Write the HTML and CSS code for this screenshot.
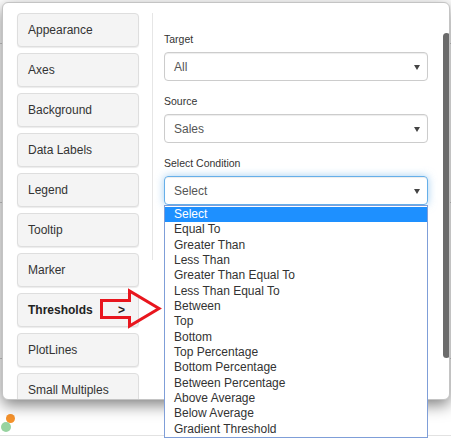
FILE: index.html
```html
<!DOCTYPE html>
<html>
<head>
<meta charset="utf-8">
<link rel="stylesheet" href="styles.css">
</head>
<body>
<div class="page">
  <div class="bg-row r1"></div>
  <div class="bg-row r2"></div>
  <div class="bg-row r3"></div>
  <div class="dots"><span class="dot orange"></span><span class="dot green"></span></div>
  <div class="bg-foot"></div>
</div>

<div class="modal">
  <div class="modal-body">
    <nav class="tabs">
      <div class="tab">Appearance</div>
      <div class="tab">Axes</div>
      <div class="tab">Background</div>
      <div class="tab">Data Labels</div>
      <div class="tab">Legend</div>
      <div class="tab">Tooltip</div>
      <div class="tab">Marker</div>
      <div class="tab active"><span>Thresholds</span><span>&gt;</span></div>
      <div class="tab">PlotLines</div>
      <div class="tab">Small Multiples</div>
    </nav>
    <section class="panel">
      <div class="field">
        <div class="label">Target</div>
        <div class="select"><span>All</span><i class="caret"></i></div>
      </div>
      <div class="field">
        <div class="label">Source</div>
        <div class="select"><span>Sales</span><i class="caret"></i></div>
      </div>
      <div class="field">
        <div class="label">Select Condition</div>
        <div class="select focus"><span>Select</span><i class="caret"></i></div>
      </div>
    </section>
  </div>
  <div class="thumb"></div>
</div>

<ul class="dropdown">
  <li class="hl">Select</li>
  <li>Equal To</li>
  <li>Greater Than</li>
  <li>Less Than</li>
  <li>Greater Than Equal To</li>
  <li>Less Than Equal To</li>
  <li>Between</li>
  <li>Top</li>
  <li>Bottom</li>
  <li>Top Percentage</li>
  <li>Bottom Percentage</li>
  <li>Between Percentage</li>
  <li>Above Average</li>
  <li>Below Average</li>
  <li>Gradient Threshold</li>
</ul>

<svg class="arrow" width="72" height="48" viewBox="96 284 72 48">
  <polygon points="101.5,300.5 129.5,300.5 129.5,291 159,308.5 129.5,326 129.5,317.5 101.5,317.5" fill="none" stroke="#e8161e" stroke-width="3" stroke-linejoin="miter"/>
</svg>
</body>
</html>
```

FILE: styles.css
```css
* { box-sizing: border-box; }
html, body { margin: 0; padding: 0; }
body {
  width: 451px;
  height: 441px;
  overflow: hidden;
  background: #fff;
  font-family: "Liberation Sans", Arial, sans-serif;
  color: #333;
  position: relative;
}

.page { display: flex; flex-direction: column; }
.bg-row { border-bottom: 1px solid #d0d0d0; }
.r1 { height: 44px; }
.r2 { height: 159px; }
.r3 { height: 156px; }
.dots { height: 78px; padding: 55px 0 0 1px; display: flex; flex-direction: column; }
.dot { display: block; width: 9px; height: 9px; border-radius: 50%; }
.orange { background: #f5922c; margin-left: 5px; }
.green { background: #97d3a0; margin-top: -1px; width: 10px; height: 10px; }
.bg-foot { border-bottom: 1px solid #e2e2e2; margin-top: -42px; height: 41px; }

.modal {
  position: absolute;
  left: 2px;
  top: 2px;
  width: 448px;
  height: 398px;
  background: #fff;
  border: 1px solid #c4c4c4;
  border-radius: 6px;
  box-shadow: 0 5px 15px rgba(0,0,0,.5);
  overflow: hidden;
}
.modal-body {
  display: flex;
  align-items: flex-start;
  padding: 10px 0 0 14px;
}
.tabs {
  width: 122px;
  display: flex;
  flex-direction: column;
  gap: 6px;
}
.tab {
  height: 34px;
  background: #f4f4f4;
  border: 1px solid #dedede;
  border-radius: 4px;
  box-shadow: 0 1px 1px rgba(0,0,0,.08);
  padding: 0 13px 0 10px;
  display: flex;
  align-items: center;
  justify-content: space-between;
  font-size: 12px;
  color: #333;
}
.tab.active { font-weight: bold; color: #222; }

.panel {
  margin-left: 13px;
  border-left: 1px solid #e6e6e6;
  height: 247px;
  padding: 19px 0 0 11px;
}
.field { margin-bottom: 13px; }
.label {
  font-size: 10.5px;
  line-height: 14px;
  margin-bottom: 6px;
  color: #333;
}
.select {
  width: 264px;
  height: 29px;
  border: 1px solid #ccc;
  border-radius: 4px;
  box-shadow: inset 0 1px 1px rgba(0,0,0,.075);
  display: flex;
  align-items: center;
  justify-content: space-between;
  padding: 0 7px 0 9px;
  font-size: 12px;
  color: #555;
}
.select.focus {
  border-color: #66afe9;
  box-shadow: inset 0 1px 1px rgba(0,0,0,.075), 0 0 8px rgba(102,175,233,.6);
}
.caret {
  width: 0;
  height: 0;
  border-left: 3px solid transparent;
  border-right: 3px solid transparent;
  border-top: 5px solid #444;
  margin-top: 1px;
}

.thumb {
  position: absolute;
  left: 440px;
  top: 30px;
  width: 7px;
  height: 325px;
  background: #6b6b6b;
  border-radius: 4px;
}

.dropdown {
  position: absolute;
  left: 164px;
  top: 205px;
  width: 264px;
  height: 233px;
  margin: 0;
  padding: 1px 0 0;
  list-style: none;
  background: #fff;
  border: 1px solid #7f9ed8;
  font-size: 12px;
  color: #333;
}
.dropdown li {
  height: 15.35px;
  line-height: 15.35px;
  padding-left: 9px;
}
.dropdown li.hl { background: #1e90ff; color: #fff; }

.arrow {
  position: absolute;
  left: 96px;
  top: 284px;
}
```
